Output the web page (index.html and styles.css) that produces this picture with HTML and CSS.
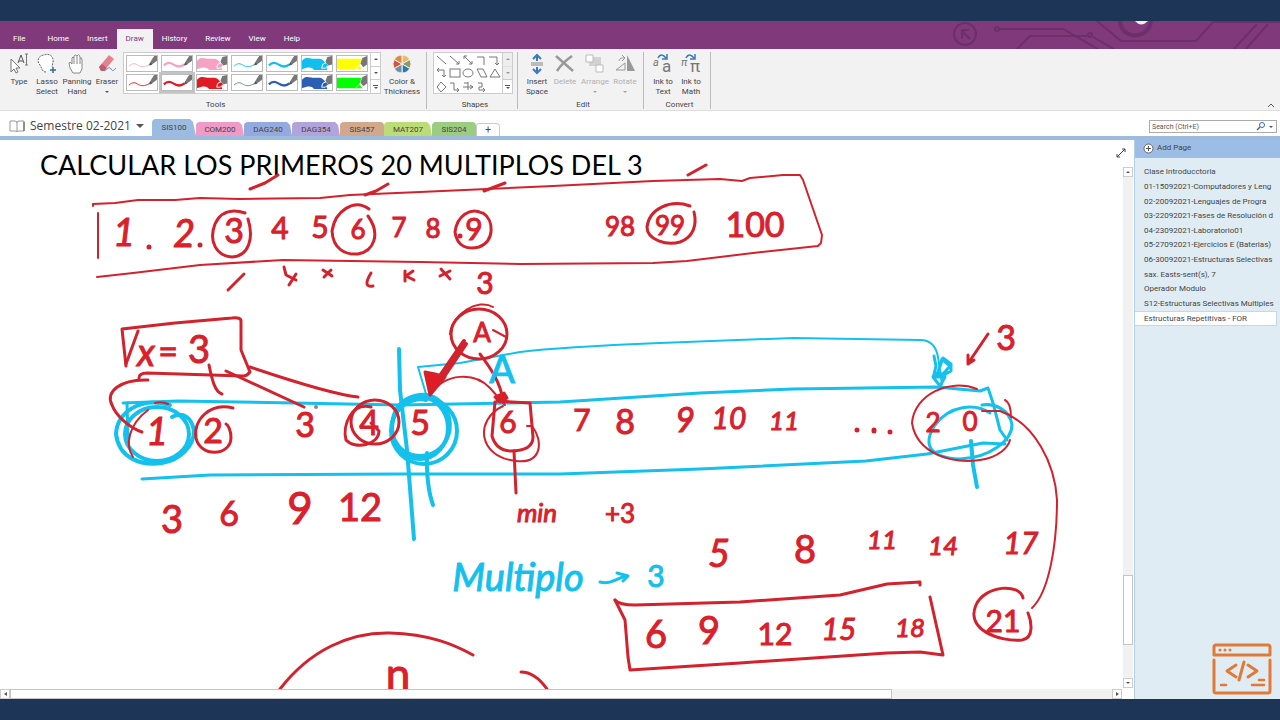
FILE: index.html
```html
<!DOCTYPE html>
<html lang="es">
  <head>
    <meta charset="UTF-8" />
    <meta name="viewport" content="width=device-width, initial-scale=1">
    <title>Estructuras Repetitivas - FOR</title>
    <link rel="stylesheet" href="styles.css">
  </head>
  <body>
    <!-- shared pen previews -->
    <svg class="defs" aria-hidden="true">
      <symbol id="nib" viewBox="0 0 32 16">
        <path d="M24 8 L27 3 L29 0 H32 V5 L28 8 L25 10 Z" fill="#777"/>
        <path d="M23 10 L25 7 L27 9 Z" fill="#555"/>
      </symbol>
      <symbol id="pen-thin" viewBox="0 0 32 16">
        <path d="M2 11 C6 7 9 8 12 10 S19 12 24 9" fill="none" stroke="currentColor"/>
        <use href="#nib"/>
      </symbol>
      <symbol id="pen-thick" viewBox="0 0 32 16">
        <path d="M2 10 C6 6 9 7 12 9 S19 13 24 9" fill="none" stroke="currentColor" stroke-width="2.4"/>
        <use href="#nib"/>
      </symbol>
      <symbol id="pen-wide" viewBox="0 0 32 16">
        <path d="M0 5 C4 0 9 3 13 3 S21 2 24 6 L27 15 H13 C10 11 6 12 0 14 Z" fill="currentColor"/>
        <path d="M21 13 L22 9 L26 7 L28 10 L25 13 Z" fill="currentColor" stroke="#fff"/>
        <path d="M25 6 L27 1 L32 0 V9 L28 10 Z" fill="#777"/>
      </symbol>
      <symbol id="pen-block" viewBox="0 0 32 16">
        <path d="M0 3 H26 L24 10 L27 14 H0 Z" fill="currentColor"/>
        <path d="M20 14 L25 9 L28 13" fill="none" stroke="#fff"/>
        <path d="M25 8 L27 2 L32 0 V9 L28 12 Z" fill="#777"/>
      </symbol>
    </svg>

    <div class="frame"></div>

    <header class="titlebar">
      <nav class="menu">
        <a href="#" class="file">File</a>
        <a href="#">Home</a>
        <a href="#">Insert</a>
        <a href="#" class="active">Draw</a>
        <a href="#">History</a>
        <a href="#">Review</a>
        <a href="#">View</a>
        <a href="#">Help</a>
      </nav>
      <svg class="circuit" width="340" height="28" viewBox="940 21 340 28" aria-hidden="true">
        <g fill="none" stroke="#6c2f6b" stroke-width="2">
          <circle cx="965" cy="34" r="11"/>
          <path d="M962 39 V30 H969 M962 31 L970 39"/>
          <circle cx="997" cy="29" r="2"/>
          <path d="M1000 29 H1063 L1098 49"/>
          <path d="M1017 49 L1030 36 H1087"/>
          <circle cx="1090" cy="35" r="2"/>
          <path d="M1093 37 L1114 49 M1097 21 L1121 41 H1196 L1213 22 H1280"/>
          <path d="M1120 21 C1121 40 1149 40 1151 21" stroke-width="4"/>
          <path d="M1234 49 L1257 24 M1246 49 L1268 24"/>
        </g>
        <path d="M1135 21 Q1141 28 1148 21 Z" fill="#eee"/>
      </svg>
    </header>

    <div class="ribbon">
      <section class="group tools">
        <div class="items">
          <button class="tool type">
            <svg width="20" height="22" viewBox="0 0 20 22">
              <path d="M2 6 V19 L5 16 L7 20 L9 19 L7 15 H11 Z" fill="#fff" stroke="#777"/>
              <path d="M9 10 L12 2 L15 10 M10 8 H14" fill="none" stroke="#555"/>
              <path d="M16 1 H19 M17.500 1 V12 M16 12 H19" fill="none" stroke="#777"/>
            </svg>
            <span>Type</span>
          </button>
          <button class="tool">
            <svg width="20" height="22" viewBox="0 0 20 22">
              <path d="M9 19 C5 19 5 15 3 12 C-1 8 2 2 7 2 C12 0 17 3 16 9 L15 14" fill="#fff" stroke="#666" stroke-dasharray="2 1"/>
              <path d="M16 14 V20 M13 17 H19" stroke="#2e6da4" stroke-width="1.500"/>
            </svg>
            <span>Lasso<br>Select</span>
          </button>
          <button class="tool panning">
            <svg width="20" height="22" viewBox="0 0 20 22">
              <path d="M6 20 L3 15 L2 10 Q3 8 5 11 V5 Q6 3 7 5 V3 Q8 1 10 3 V3 Q12 0 13 4 V5 Q15 4 15 7 V16 L13 20 Z" fill="#fff" stroke="#888"/>
              <path d="M7 5 V11 M10 3 V11 M13 5 V11" stroke="#888"/>
            </svg>
            <span>Panning<br>Hand</span>
          </button>
          <button class="tool">
            <svg width="20" height="22" viewBox="0 0 20 22">
              <path d="M2 14 L12 2 L17 6 L7 18 H4 Z" fill="#e5808f"/>
              <path d="M2 14 L5 11 L10 15 L7 18 H4 Z" fill="#c9566b"/>
              <path d="M7 18 C11 16 12 13 14 16 S17 17 19 15" fill="none" stroke="#4a87b8"/>
            </svg>
            <span>Eraser</span>
            <i class="caret"></i>
          </button>
          <div class="gallery">
            <div class="pens">
              <button class="pen pale-pink" aria-label="Pink pen"><svg><use href="#pen-thin"/></svg></button>
              <button class="pen pink" aria-label="Pink marker"><svg><use href="#pen-thick"/></svg></button>
              <button class="pen pink" aria-label="Pink highlighter"><svg><use href="#pen-wide"/></svg></button>
              <button class="pen cyan" aria-label="Cyan pen"><svg><use href="#pen-thin"/></svg></button>
              <button class="pen cyan" aria-label="Cyan marker"><svg><use href="#pen-thick"/></svg></button>
              <button class="pen cyan" aria-label="Cyan highlighter"><svg><use href="#pen-wide"/></svg></button>
              <button class="pen yellow" aria-label="Yellow highlighter"><svg><use href="#pen-block"/></svg></button>
              <button class="pen red" aria-label="Red pen"><svg><use href="#pen-thin"/></svg></button>
              <button class="pen red selected" aria-label="Red marker"><svg><use href="#pen-thick"/></svg></button>
              <button class="pen red" aria-label="Red highlighter"><svg><use href="#pen-wide"/></svg></button>
              <button class="pen slate" aria-label="Blue pen"><svg><use href="#pen-thin"/></svg></button>
              <button class="pen blue" aria-label="Blue marker"><svg><use href="#pen-thick"/></svg></button>
              <button class="pen blue" aria-label="Blue highlighter"><svg><use href="#pen-wide"/></svg></button>
              <button class="pen green" aria-label="Green highlighter"><svg><use href="#pen-block"/></svg></button>
            </div>
            <div class="spin">
              <button aria-label="Previous pens"><i class="caret up"></i></button>
              <button aria-label="Next pens"><i class="caret"></i></button>
              <button aria-label="More pens"><i class="bar"></i><i class="caret"></i></button>
            </div>
          </div>
          <button class="tool color">
            <svg width="20" height="22" viewBox="0 0 20 22">
              <g stroke="#f2f2f2">
                <path d="M10 11 L10 2 A9 9 0 0 1 17.800 6.500 Z" fill="#eeb765"/>
                <path d="M10 11 L17.800 6.500 A9 9 0 0 1 17.800 15.500 Z" fill="#8f9a62"/>
                <path d="M10 11 L17.800 15.500 A9 9 0 0 1 10 20 Z" fill="#2f77a5"/>
                <path d="M10 11 L10 20 A9 9 0 0 1 2.200 15.500 Z" fill="#6b8eaa"/>
                <path d="M10 11 L2.200 15.500 A9 9 0 0 1 2.200 6.500 Z" fill="#d2563b"/>
                <path d="M10 11 L2.200 6.500 A9 9 0 0 1 10 2 Z" fill="#e08745"/>
              </g>
            </svg>
            <span>Color &amp;<br>Thickness</span>
          </button>
        </div>
        <h2>Tools</h2>
      </section>

      <section class="group shapes">
        <div class="items">
          <div class="gallery">
            <svg class="shape-set" width="68" height="41" viewBox="0 0 68 41" role="img" aria-label="Shapes">
              <g fill="none" stroke="#777">
                <path d="M3 3 L12 11 M16 3 L25 11 M22 11 H25 V8 M30 3 L38 11 M30 6 V3 H33 M35 11 H38 V8 M43 4 H50 V12 M55 4 H63 V12 M61 10 L63 12 L65 10"/>
                <path d="M3 17 H10 V24 M5 15 L3 17 L5 19 M8 22 L10 24 L12 22"/>
                <rect x="16" y="16" width="10" height="8"/>
                <ellipse cx="34" cy="20" rx="5" ry="4"/>
                <path d="M43 16 H49 L53 24 H47 Z M56 24 L61 16 L66 24 Z"/>
                <path d="M3 34 L7 29 L12 34 L7 39 Z M16 30 H20 V37 H25 M23 35 L25 37 L23 39 M29 34 H39 M34 29 V37 M30 30 H34 M36 32 L39 34 L36 36 M44 30 H48 V34 H45 V37 H51 M49 35 L51 37 L49 39"/>
              </g>
            </svg>
            <div class="spin muted">
              <button disabled aria-label="Previous shapes"><i class="caret up"></i></button>
              <button disabled aria-label="Next shapes"><i class="caret"></i></button>
              <button aria-label="More shapes"><i class="bar"></i><i class="caret"></i></button>
            </div>
          </div>
        </div>
        <h2>Shapes</h2>
      </section>

      <section class="group edit">
        <div class="items">
          <button class="tool">
            <svg width="20" height="22" viewBox="0 0 20 22">
              <path d="M4 9 H16 V13 H4 Z" fill="#bbb"/>
              <path d="M10 8 V2 M6 6 L10 2 L14 6 M10 14 V20 M6 16 L10 20 L14 16" fill="none" stroke="#3b78bd" stroke-width="2"/>
            </svg>
            <span>Insert<br>Space</span>
          </button>
          <button class="tool" disabled>
            <svg width="20" height="22" viewBox="0 0 20 22">
              <path d="M1 3 L18 18 M17 3 Q7 10 2 18" fill="none" stroke="#999" stroke-width="2.500"/>
            </svg>
            <span>Delete</span>
          </button>
          <button class="tool panning" disabled>
            <svg width="20" height="22" viewBox="0 0 20 22">
              <path d="M8 4 H16 V13 H4 V8 H8 Z" fill="#d2d2d2"/>
              <path d="M1 2 H8 V9 H1 Z M11 12 H18 V19 H11 Z" fill="#fff" stroke="#bbb"/>
            </svg>
            <span>Arrange</span>
            <i class="caret"></i>
          </button>
          <button class="tool" disabled>
            <svg width="20" height="22" viewBox="0 0 20 22">
              <path d="M12 2 L20 18 H12 Z" fill="#999"/>
              <path d="M10 10 V17 H1 Z M4 8 Q5 4 10 5 M7 2 L10 5 L7 8" fill="none" stroke="#999"/>
            </svg>
            <span>Rotate</span>
            <i class="caret"></i>
          </button>
        </div>
        <h2>Edit</h2>
      </section>

      <section class="group convert">
        <div class="items">
          <button class="tool">
            <svg width="22" height="22" viewBox="0 0 22 22">
              <text x="1" y="13" class="glyph slanted">a</text>
              <text x="10" y="19" class="glyph big">a</text>
              <path d="M6 5 Q9 -1 14 5 M15 1 V6 H10" fill="none" stroke="#3b78bd" stroke-width="1.500"/>
            </svg>
            <span>Ink to<br>Text</span>
          </button>
          <button class="tool">
            <svg width="22" height="22" viewBox="0 0 22 22">
              <text x="1" y="13" class="glyph slanted">π</text>
              <text x="10" y="19" class="glyph big">π</text>
              <path d="M6 5 Q9 -1 14 5 M15 1 V6 H10" fill="none" stroke="#3b78bd" stroke-width="1.500"/>
            </svg>
            <span>Ink to<br>Math</span>
          </button>
        </div>
        <h2>Convert</h2>
      </section>

      <button class="collapse" aria-label="Collapse the ribbon">
        <svg width="8" height="5" viewBox="0 0 8 5"><path d="M1 4 L4 1 L7 4" fill="none" stroke="#555"/></svg>
      </button>
    </div>

    <div class="notebook-bar">
      <button class="notebook">
        <svg width="16" height="13" viewBox="0 0 16 13">
          <path d="M1 1 H6 Q8 1 8 3 Q8 1 10 1 H15 V11 H10 Q8 11 8 12 Q8 11 6 11 H1 Z M8 3 V12" fill="none" stroke="#999"/>
          <path d="M15 2 V11" stroke="#555"/>
        </svg>
        <span>Semestre 02-2021</span>
        <i class="caret large"></i>
      </button>
      <nav class="sections">
        <a href="#" class="section current">SIS100</a>
        <a href="#" class="section rose">COM200</a>
        <a href="#" class="section sky">DAG240</a>
        <a href="#" class="section violet">DAG354</a>
        <a href="#" class="section tan">SIS457</a>
        <a href="#" class="section lime">MAT207</a>
        <a href="#" class="section leaf">SIS204</a>
        <button class="new-section" aria-label="Create a new section">+</button>
      </nav>
      <div class="search">
        <input type="text" placeholder="Search (Ctrl+E)" aria-label="Search">
        <svg width="9" height="9" viewBox="0 0 9 9">
          <circle cx="6" cy="3" r="2.500" fill="none" stroke="#2e6da4"/>
          <path d="M4 5 L1 8" stroke="#2e6da4" stroke-width="1.500"/>
        </svg>
        <i class="caret"></i>
      </div>
    </div>

    <div class="workspace">
      <main class="editor">
        <div class="page-row">
          <div class="canvas">
            <h1>CALCULAR LOS PRIMEROS 20 MULTIPLOS DEL 3</h1>
            <svg class="ink" width="1124" height="549" viewBox="0 140 1124 549">
              <!-- number line 1..100 -->
              <g class="red thin">
                <path d="M93 206 V204 L115 203 L138 200 L175 200 L200 198 L240 199 L320 198 L350 195 L420 192 L487 189 L553 186 L653 181 L720 179 L742 181 L750 178 L783 175 L800 175 L803 180 L822 235 L821 243 L818 246 L753 253 L687 261 L653 263 L520 264 L420 262 L283 260 L200 265 L133 273 L97 277"/>
                <path d="M98 213 V258"/>
              </g>
              <g class="red medium">
                <path d="M245 213 C230 208 220 213 215 224 C208 242 217 256 232 257 C249 256 254 238 248 219"/>
                <path d="M369 209 C354 198 335 211 332 231 C333 249 345 255 358 254 C374 251 381 234 368 216"/>
                <path d="M482 213 C470 207 457 216 455 232 C457 247 468 250 479 247 C495 241 494 220 483 213"/>
                <path d="M690 206 C670 199 649 209 647 227 C647 240 667 246 680 242 C694 237 697 224 694 212"/>
              </g>
              <g class="red medium">
                <path d="M250 189 L265 183 L278 175 M365 195 L376 191 L388 184 M484 191 L505 183 M688 175 L706 165"/>
                <path d="M228 290 L244 274"/>
                <path d="M284 267 L286 275 L296 280 M296 274 L289 285 M323 270 L332 276 M331 270 L324 277 M371 273 Q362 288 373 286 M405 271 V281 M413 271 L406 276 L414 280 M441 269 L450 279 M450 271 L440 276"/>
              </g>
              <g class="red dots">
                <path d="M149 247 V247 M200 245 V245 M460 236 V236"/>
              </g>
              <g class="script red-text">
                <text x="124" y="246" class="s38 slanted">1</text>
                <text x="184" y="247" class="s38 slanted">2</text>
                <text x="234" y="243" class="s34">3</text>
                <text x="280" y="239" class="s30">4</text>
                <text x="320" y="238" class="s30">5</text>
                <text x="358" y="239" class="s26">6</text>
                <text x="399" y="237" class="s26">7</text>
                <text x="433" y="238" class="s26">8</text>
                <text x="474" y="240" class="s30">9</text>
                <text x="620" y="236" class="s26">98</text>
                <text x="670" y="235" class="s26">99</text>
                <text x="755" y="237" class="s34">100</text>
                <text x="485" y="294" class="s30">3</text>
              </g>

              <!-- cyan band -->
              <g class="blue medium">
                <path d="M123 403 L178 401 L240 402 L400 405 L560 402 L700 393 L793 389 L937 387 L980 391 L988 388 L993 403 L1000 430 L1007 440"/>
                <path d="M142 479 L210 475 L400 474 L560 474 L700 469 L866 461 L927 454 L983 443 L1005 444"/>
                <path d="M426 394 L418 367 L460 363 L520 352 Q560 347 660 343 L793 338 L920 340 Q935 340 938 357 L942 384" class="fine"/>
                <path d="M127 403 L128 440"/>
              </g>
              <g class="blue thick">
                <ellipse cx="157" cy="434" rx="32" ry="27"/>
                <path d="M170 405 C138 396 117 414 116 434 C119 458 140 466 162 463 C180 460 194 446 194 431 C192 418 183 411 172 417"/>
                <ellipse cx="420" cy="428" rx="28" ry="31"/>
                <ellipse cx="424" cy="431" rx="33" ry="33"/>
                <path d="M395 412 C402 395 430 387 443 405 C459 426 445 456 421 456 C399 456 386 436 395 412 C405 400 420 398 426 400"/>
                <path d="M399 349 L400 390 L407 450 L414 539"/>
                <path d="M427 453 Q426 485 433 505"/>
                <path d="M971 441 L973 465 L977 487"/>
              </g>
              <g class="blue medium">
                <path d="M990 413 C975 403 950 405 935 425 C922 445 930 458 960 459 C990 458 1012 440 1012 425 C1010 410 995 403 982 405"/>
                <path d="M934 356 L936 366 L934 374 L944 375 L951 371 L951 364 L943 358 L938 372 L942 359 L950 366 L943 374 L935 373 L933 377 L940 386 L945 377 L935 377"/>
                <path d="M600 582 C612 585 618 577 627 576 M617 573 L628 576 L623 581"/>
              </g>

              <!-- x = 3 and its lines to the positions -->
              <g class="red medium">
                <path d="M126 366 L122 329 L175 323 L232 318 Q241 317 241 321 L241 350 L250 372 Q247 376 243 376 L147 373 Q139 373 139 378"/>
                <path d="M126 364 L138 331"/>
                <path d="M148 380 C120 379 105 392 112 405 C116 416 130 428 142 432"/>
                <path d="M209 365 C212 380 215 392 222 394"/>
                <path d="M226 371 L304 407 M250 367 Q330 394 358 397"/>
                <path d="M148 410 C128 425 125 445 133 457 M155 403 Q162 401 168 404" class="fine"/>
                <path d="M233 408 C210 402 193 420 196 438 C200 457 230 457 231 438 C231 430 228 425 226 424"/>
                <ellipse cx="375" cy="422" rx="24" ry="22"/>
                <path d="M371 407 C352 402 342 425 346 440 C355 450 379 445 379 431 L371 423"/>
              </g>

              <!-- start arrow A -->
              <g class="red medium">
                <ellipse cx="479" cy="334" rx="28" ry="25"/>
                <path d="M493 307 C478 298 452 314 450 334 M493 330 L506 337" class="fine"/>
                <path d="M464 341 L440 376 M466 344 L443 378" class="bold"/>
                <path d="M425 372 L435 374 L445 377 L430 395 Z" class="filled"/>
                <path d="M430 395 C445 372 475 372 490 388 L505 405" class="fine"/>
                <path d="M480 354 C488 365 500 380 503 400"/>
                <path d="M495 397 L504 393 L507 398 L500 402 Z" class="filled"/>
                <path d="M495 402 L492 436 Q496 450 510 451 Q533 451 533 437 L530 403 L497 401"/>
                <path d="M503 406 C474 420 478 457 516 461 C543 464 543 440 532 426 M527 426 H532" class="fine"/>
                <path d="M514 451 L516 493"/>
              </g>

              <!-- position 20 and jump to 21 -->
              <g class="red fine">
                <path d="M977 389 C949 378 914 395 912 423 C917 454 952 464 980 460 C1000 457 1008 447 1010 440"/>
                <path d="M982 411 L1000 411 C1035 423 1055 464 1057 500 C1057 545 1049 592 1032 608 M1005 400 Q1011 403 1011 417"/>
              </g>
              <g class="red medium">
                <path d="M988 334 L969 362 M968 355 L968 364 L974 360"/>
                <path d="M1023 598 C1020 583 985 585 976 605 C965 630 1000 642 1022 640 C1035 638 1031 620 1028 613"/>
                <path d="M615 600 Q619 605 635 605 L740 602 L840 595 L887 584 L920 582 V585"/>
                <path d="M615 600 L625 620 L628 657 L630 670 L740 663 L887 653 L920 652 L943 655 L930 597"/>
                <path d="M280 689 C310 650 350 632 390 633 C430 634 455 645 473 655 M521 672 Q535 672 547 689"/>
                <path d="M857 430 V430 M874 431 V430 M890 432 V432" class="dots"/>
              </g>

              <g class="script red-text">
                <text x="146" y="366" class="s38 slanted">x</text>
                <text x="168" y="364" class="s34">=</text>
                <text x="199" y="363" class="s38">3</text>
                <text x="482" y="342" class="s26">A</text>
                <text x="1006" y="350" class="s34">3</text>
                <text x="157" y="445" class="s38 slanted">1</text>
                <text x="213" y="443" class="s34">2</text>
                <text x="305" y="437" class="s34">3</text>
                <text x="369" y="435" class="s34">4</text>
                <text x="420" y="435" class="s34">5</text>
                <text x="508" y="433" class="s30">6</text>
                <text x="582" y="431" class="s30">7</text>
                <text x="625" y="434" class="s34">8</text>
                <text x="685" y="432" class="s34 slanted">9</text>
                <text x="729" y="429" class="s30 slanted">10</text>
                <text x="784" y="430" class="s26 slanted">11</text>
                <text x="933" y="432" class="s26">2</text>
                <text x="970" y="431" class="s26">0</text>
                <text x="172" y="533" class="s38">3</text>
                <text x="229" y="526" class="s34">6</text>
                <text x="300" y="524" class="s44">9</text>
                <text x="360" y="521" class="s38">12</text>
                <text x="537" y="522" class="s26 slanted">min</text>
                <text x="620" y="523" class="s26">+3</text>
                <text x="719" y="567" class="s38 slanted">5</text>
                <text x="805" y="563" class="s38">8</text>
                <text x="882" y="549" class="s26 slanted">11</text>
                <text x="943" y="555" class="s26 slanted">14</text>
                <text x="1021" y="554" class="s30 slanted">17</text>
                <text x="656" y="648" class="s38">6</text>
                <text x="709" y="644" class="s38">9</text>
                <text x="775" y="645" class="s30">12</text>
                <text x="839" y="640" class="s30 slanted">15</text>
                <text x="910" y="637" class="s26 slanted">18</text>
                <text x="1003" y="632" class="s30">21</text>
                <text x="398" y="690" class="s44">n</text>
              </g>
              <g class="script blue-text">
                <text x="502" y="383" class="s38">A</text>
                <text x="518" y="591" class="s38 slanted">Multiplo</text>
                <text x="656" y="587" class="s30">3</text>
              </g>
              <circle cx="316" cy="407" r="2" fill="#888"/>
            </svg>
          </div>
          <div class="vscroll">
            <button aria-label="Scroll up"><i class="caret up"></i></button>
            <div class="track"><div class="thumb"></div></div>
            <button aria-label="Scroll down"><i class="caret"></i></button>
          </div>
          <button class="expand" aria-label="Full page view">
            <svg width="10" height="10" viewBox="0 0 10 10"><path d="M1 9 L9 1 M6 1 H9 V4 M1 6 V9 H4" fill="none" stroke="#444"/></svg>
          </button>
        </div>
        <div class="hscroll">
          <button aria-label="Scroll left"><i class="caret left"></i></button>
          <div class="track"><div class="thumb"></div></div>
          <button aria-label="Scroll right"><i class="caret right"></i></button>
        </div>
      </main>

      <aside class="pages">
        <button class="add-page">
          <svg width="11" height="11" viewBox="0 0 11 11">
            <circle cx="5.500" cy="5.500" r="4.500" fill="#fff" stroke="#666"/>
            <path d="M3 5.500 H8 M5.500 3 V8" stroke="#555"/>
          </svg>
          <span>Add Page</span>
        </button>
        <nav class="page-list">
          <a href="#">Clase Introducctoria</a>
          <a href="#">01-15092021-Computadores y Leng</a>
          <a href="#">02-20092021-Lenguajes de Progra</a>
          <a href="#">03-22092021-Fases de Resolución d</a>
          <a href="#">04-23092021-Laboratorio01</a>
          <a href="#">05-27092021-Ejercicios E (Baterias)</a>
          <a href="#">06-30092021-Estructuras Selectivas</a>
          <a href="#">sax. Easts-sent(s), 7</a>
          <a href="#">Operador Modulo</a>
          <a href="#">S12-Estructuras Selectivas Multiples</a>
          <a href="#" class="current">Estructuras Repetitivas - FOR</a>
        </nav>
        <svg class="code-logo" width="60" height="52" viewBox="0 0 60 52" role="img" aria-label="Code">
          <g fill="none" stroke="#e27a37" stroke-width="3" stroke-linecap="round" stroke-linejoin="round">
            <path d="M4 2 H56 Q58 2 58 4 V12 H2 V4 Q2 2 4 2 Z" />
            <path d="M2 17 V48 Q2 50 4 50 H56 Q58 50 58 48 V17"/>
            <path d="M24 22 L15 28 L24 34 M36 22 L45 28 L36 34 M32 19 L27 37"/>
            <path d="M9 42 H14 M47 37 H52 M40 42 H52" stroke-width="2.500"/>
          </g>
          <g fill="#e27a37"><circle cx="8" cy="7" r="1.500"/><circle cx="13" cy="7" r="1.500"/><circle cx="18" cy="7" r="1.500"/></g>
        </svg>
      </aside>
    </div>

    <div class="frame"></div>
  </body>
</html>
```

FILE: styles.css
```css
* {
  box-sizing: border-box;
}
body {
  margin: 0;
  height: 100vh;
  display: flex;
  flex-direction: column;
  overflow: hidden;
  background: #fff;
  color: #444;
  font-family: Roboto, 'Open Sans', sans-serif;
  font-size: 8px;
  line-height: 10px;
}
button {
  margin: 0;
  padding: 0;
  border: none;
  background: none;
  color: inherit;
  font: inherit;
}
a {
  color: inherit;
  text-decoration: none;
}
svg {
  display: block;
  flex: none;
}
.defs {
  position: absolute;
  width: 0;
  height: 0;
}
.frame {
  flex: none;
  height: 21px;
  background: #1d3557;
}

/* small triangles */
.caret {
  display: block;
  width: 0;
  height: 0;
  border: 2px solid transparent;
  border-top-color: #555;
  border-bottom: none;
}
.caret.up {
  border-top: none;
  border-bottom: 2px solid #555;
}
.caret.left {
  border: 2px solid transparent;
  border-right: 3px solid #555;
  border-left: none;
}
.caret.right {
  border: 2px solid transparent;
  border-left: 3px solid #555;
  border-right: none;
}
.bar {
  width: 5px;
  height: 1px;
  background: #555;
}
.caret.large {
  border-width: 4px 4px 0;
}

/* title bar */
.titlebar {
  flex: none;
  display: flex;
  justify-content: space-between;
  align-items: flex-end;
  height: 28px;
  background: #80397b;
  color: #fff;
}
.menu {
  display: flex;
  padding-left: 4px;
}
.menu a {
  padding: 0 9px;
  line-height: 20px;
}
.menu .file {
  margin-right: 4px;
}
.menu .active {
  background: #f2f2f2;
  color: #80397b;
}

/* ribbon */
.ribbon {
  flex: none;
  display: flex;
  height: 62px;
  padding-top: 3px;
  background: #f2f2f2;
  border-bottom: 1px solid #ddd;
}
.group {
  display: flex;
  flex-direction: column;
  justify-content: space-between;
  height: 57px;
  border-right: 1px solid #bbb;
}
.group h2 {
  margin: 0;
  font-size: 8px;
  font-weight: normal;
  line-height: 8px;
  text-align: center;
}
.items {
  display: flex;
}
.tools {
  width: 427px;
  padding-left: 5px;
}
.shapes {
  width: 91px;
  padding-left: 6px;
}
.edit {
  width: 126px;
  padding-left: 5px;
}
.convert {
  width: 67px;
  padding-left: 5px;
}
.tool {
  display: flex;
  flex-direction: column;
  align-items: center;
  width: 28px;
  padding-top: 1px;
  white-space: nowrap;
}
.tool span {
  margin-top: 2px;
}
.tool .caret {
  margin-top: 4px;
}
.tool:disabled {
  color: #b0b0b0;
}
.tool:disabled .caret {
  opacity: .5;
}
.panning {
  width: 32px;
}
.color {
  width: 42px;
}
.glyph {
  fill: #777;
  font-size: 11px;
}
.glyph.big {
  font-size: 17px;
}
.slanted {
  font-style: italic;
}
.gallery {
  display: flex;
  height: 42px;
  border: 1px solid #ccc;
  background: #fff;
}
.tools .gallery {
  margin-left: 2px;
}
.pens {
  display: grid;
  grid-template-columns: repeat(7, 32px);
  grid-auto-rows: 17px;
  gap: 2px 3px;
  padding: 2px;
}
.pen {
  border: 1px solid #bbb;
}
.pen svg {
  width: 30px;
  height: 15px;
}
.pen.selected {
  outline: 2px solid #c4c4c4;
}
.pale-pink {
  color: #e8b4c4;
}
.pink {
  color: #f7a1c4;
}
.cyan {
  color: #10bfef;
}
.yellow {
  color: #ff0;
}
.red {
  color: #e01b24;
}
.slate {
  color: #6d87a0;
}
.blue {
  color: #2c5fb3;
}
.green {
  color: #0f0;
}
.spin {
  display: flex;
  flex-direction: column;
  width: 10px;
  border-left: 1px solid #ccc;
}
.spin button {
  flex: 1;
  display: flex;
  flex-direction: column;
  align-items: center;
  justify-content: center;
  gap: 1px;
}
.spin button + button {
  border-top: 1px solid #ccc;
}
.spin button:disabled {
  background: #e3e3e3;
  opacity: .6;
}
.collapse {
  align-self: flex-end;
  margin: 0 5px 2px auto;
}

/* notebook and sections */
.notebook-bar {
  flex: none;
  display: flex;
  align-items: flex-end;
  height: 29px;
  border-bottom: 4px solid #9dbbdc;
}
.notebook {
  display: flex;
  align-items: center;
  gap: 5px;
  width: 152px;
  height: 20px;
  padding-left: 9px;
  font-family: 'Open Sans', sans-serif;
  font-size: 12px;
  white-space: nowrap;
}
.sections {
  display: flex;
  align-items: flex-end;
}
.section {
  width: 48px;
  height: 14px;
  border-radius: 4px 4px 0 0;
  clip-path: polygon(0 0, 43px 0, 46px 3px, 100% 100%, 0 100%);
  line-height: 15px;
  text-align: center;
}
.section.current {
  width: 44px;
  height: 17px;
  clip-path: polygon(0 0, 38px 0, 41px 3px, 100% 100%, 0 100%);
  background: #9bbbe0;
  line-height: 18px;
}
.rose {
  background: #ef9bc7;
}
.sky {
  background: #94aadf;
}
.violet {
  background: #b2a3da;
}
.tan {
  width: 44px;
  background: #d1a88c;
}
.lime {
  background: #bcdc77;
}
.leaf {
  width: 44px;
  background: #9ccc80;
}
.new-section {
  width: 24px;
  height: 13px;
  border: 1px solid #ccc;
  border-bottom: none;
  border-radius: 3px 4px 0 0;
  font-size: 10px;
}
.search {
  display: flex;
  align-items: center;
  gap: 4px;
  width: 128px;
  height: 13px;
  margin: 0 3px 3px auto;
  padding-right: 3px;
  border: 1px solid #aaa;
}
.search input {
  flex: 1;
  min-width: 0;
  height: 11px;
  padding: 0 2px;
  border: none;
  outline: none;
  background: none;
  font: inherit;
  font-size: 7px;
}
.search input::placeholder {
  color: #555;
}

/* page */
.workspace {
  flex: 1;
  display: flex;
  min-height: 0;
}
.editor {
  flex: 1;
  display: flex;
  flex-direction: column;
  min-width: 0;
}
.page-row {
  position: relative;
  flex: 1;
  display: flex;
  min-height: 0;
}
.canvas {
  position: relative;
  flex: 1;
  overflow: hidden;
}
.canvas h1 {
  margin: 8px 0 0 40px;
  color: #000;
  font-family: Lato, sans-serif;
  font-size: 27px;
  font-weight: normal;
  line-height: 34px;
  white-space: nowrap;
}
.ink {
  position: absolute;
  top: 0;
  left: 0;
}
.ink path,
.ink ellipse {
  fill: none;
  stroke-linecap: round;
  stroke-linejoin: round;
}
.ink .red {
  stroke: #d2222d;
}
.ink .blue {
  stroke: #14c0ec;
}
.ink .thin,
.ink .fine {
  stroke-width: 2px;
}
.ink .medium {
  stroke-width: 3px;
}
.ink .thick,
.ink .bold {
  stroke-width: 4px;
}
.ink .dots {
  stroke-width: 5px;
}
.ink .filled {
  fill: #e01b24;
}
.script {
  font-family: Lato, sans-serif;
  text-anchor: middle;
}
.red-text {
  fill: #d9202b;
  stroke: #d9202b;
}
.blue-text {
  fill: #14c0ec;
  stroke: #14c0ec;
}
.s26 {
  font-size: 26px;
}
.s30 {
  font-size: 30px;
}
.s34 {
  font-size: 34px;
}
.s38 {
  font-size: 38px;
}
.s44 {
  font-size: 44px;
}
.expand {
  position: absolute;
  top: 8px;
  right: 8px;
}
.vscroll {
  display: flex;
  flex-direction: column;
  width: 11px;
  padding: 27px 1px 1px 0;
}
.vscroll button,
.hscroll button {
  flex: none;
  display: flex;
  align-items: center;
  justify-content: center;
  width: 10px;
  height: 10px;
  border: 1px solid #ccc;
  background: #fff;
}
.track {
  flex: 1;
  display: flex;
  background: #f1f1f1;
}
.thumb {
  border: 1px solid #c4c4c4;
  background: #fff;
}
.vscroll .track {
  flex-direction: column;
  justify-content: flex-end;
  padding-bottom: 33px;
}
.vscroll .thumb {
  height: 15%;
}
.hscroll {
  flex: none;
  display: flex;
  height: 10px;
  padding-right: 12px;
}
.hscroll .thumb {
  width: 80%;
}

/* page list */
.pages {
  display: flex;
  flex-direction: column;
  width: 146px;
  border-left: 1px solid #b5cfe6;
  background: #dfecf4;
}
.add-page {
  display: flex;
  align-items: center;
  gap: 3px;
  height: 18px;
  padding: 0 0 2px 8px;
  background: #9bbde6;
}
.page-list {
  display: grid;
  grid-auto-rows: 1fr;
  height: 161px;
  margin: 7px 3px 0 0;
}
.page-list a {
  display: flex;
  align-items: center;
  padding-left: 9px;
  white-space: nowrap;
}
.page-list .current {
  border: 1px solid #c5d8e6;
  border-left: none;
  background: #fff;
}
.code-logo {
  align-self: flex-end;
  margin: auto 8px 4px 0;
}
```
